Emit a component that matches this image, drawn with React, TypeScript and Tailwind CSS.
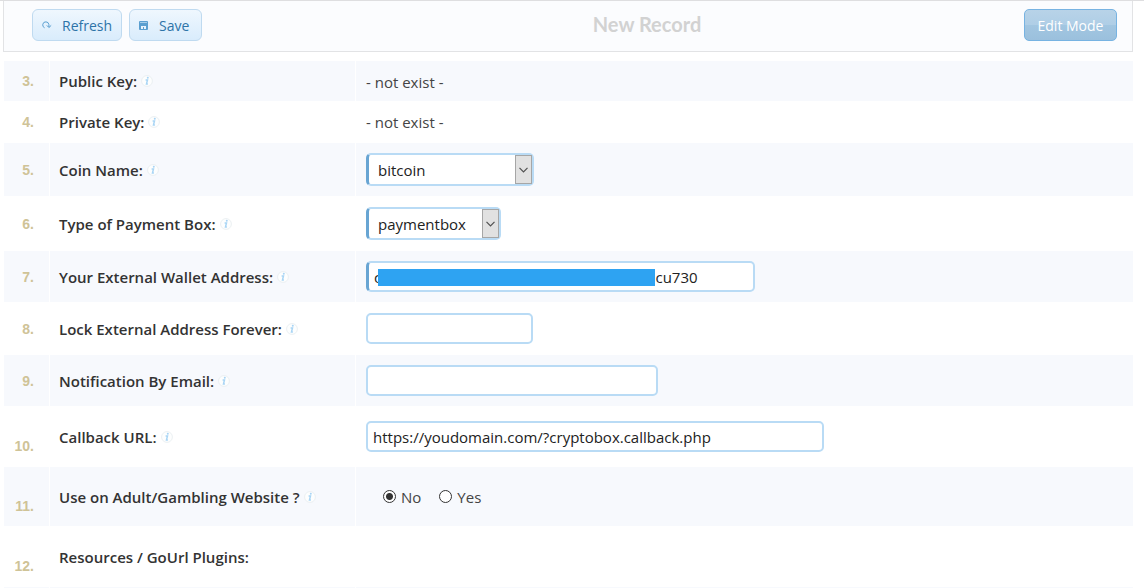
import React, { useState } from "react";

const fieldBase =
  "block rounded-[5px] border-2 border-[#b9dbf5] bg-white text-[15px] text-[#222] outline-none focus:border-[#8cc3ee]";

const toolButton =
  "flex h-8 items-center gap-2.5 rounded-md border border-[#bfdaf0] bg-linear-to-b from-[#eff7fe] to-[#d9ecfc] pt-0.5 pl-[9px] text-[14px] text-[#2e74a8]";

function InfoIcon() {
  return (
    <svg className="ml-1 inline-block shrink-0" width="12" height="12" viewBox="0 0 12 12" aria-hidden="true">
      <circle cx="6" cy="6" r="5.4" fill="#fdfefe" stroke="#e9eef0" strokeWidth="0.9" />
      <circle cx="6.8" cy="2.8" r="1" fill="#a9d5f5" />
      <path d="M4.6 4.9H6.5L5.5 8.9H6.9" fill="none" stroke="#a9d5f5" strokeWidth="1.5" />
    </svg>
  );
}

function RefreshIcon() {
  return (
    <svg width="10" height="10" viewBox="0 0 10 10" fill="none" stroke="#5b9fd0" aria-hidden="true">
      <path d="M2.6 6.8A3.1 3.1 0 1 1 6.9 3.6V6.2" strokeWidth="1" />
      <path d="M4.8 4.4L6.9 6.5L9.2 4.4" strokeWidth="1" />
    </svg>
  );
}

function SaveIcon() {
  return (
    <svg width="10" height="10" viewBox="0 0 10 10" aria-hidden="true">
      <rect x="0" y="0" width="9" height="9" rx="1" fill="#5b9fd0" />
      <rect x="1" y="1" width="7" height="1" fill="#a5cdea" />
      <path d="M2 5h5v3H5V6H4v2H2z" fill="#e8f3fc" />
    </svg>
  );
}

function SelectField({ id, options, width }: { id: string; options: string[]; width: string }) {
  return (
    <div className={`relative ${width}`}>
      <select id={id} className={`${fieldBase} h-[33px] w-full appearance-none border-l-[3px] border-l-[#68a5d3] pl-[9px]`}>
        {options.map((option) => (
          <option key={option}>{option}</option>
        ))}
      </select>
      <span className="pointer-events-none absolute inset-y-[2px] right-[2px] flex w-[17px] items-center justify-center border border-[#a6a6a6] bg-[#e1e1e1]">
        <svg width="9" height="6" viewBox="0 0 9 6" fill="none" stroke="#505050" strokeWidth="1.2" aria-hidden="true">
          <path d="M0.5 0.8L4.5 4.8L8.5 0.8" />
        </svg>
      </span>
    </div>
  );
}

type RowProps = {
  number: number;
  label: string;
  htmlFor?: string;
  height: string;
  shaded?: boolean;
  lowNumber?: boolean;
  info?: boolean;
  children?: React.ReactNode;
};

function Row({ number, label, htmlFor, height, shaded, lowNumber, info = true, children }: RowProps) {
  return (
    <tr className={`${height} ${shaded ? "bg-[#f7f9fd]" : "bg-white"}`}>
      <td
        className={`border-r border-white pr-[15px] text-right align-middle font-['Liberation_Sans',sans-serif] text-[14px] leading-4 font-bold text-[#cfc397] ${lowNumber ? "pt-[18px]" : ""}`}
      >
        {number}.
      </td>
      <th
        scope="row"
        className="border-r border-white pl-[9px] text-left align-middle text-[15px] font-semibold text-[#333]"
      >
        <span className="flex items-center">
          {htmlFor ? <label htmlFor={htmlFor}>{label}</label> : label}
          {info && <InfoIcon />}
        </span>
      </th>
      <td className="pl-[10px] align-middle">{children}</td>
    </tr>
  );
}

export default function App() {
  const [wallet, setWallet] = useState("c" + "\u00a0".repeat(70) + "\u200acu730");
  const [adult, setAdult] = useState("No");

  return (
    <main className="border-t border-[#dedee0] bg-white pr-[11px] pl-[3px] font-['Open_Sans','Noto_Sans',sans-serif] text-[15px] leading-5 text-[#444]">
      <header className="grid h-[51px] grid-cols-[auto_1fr_auto] items-start border border-t-0 border-[#e2e3e5] bg-[#fbfcfe] pt-2 pr-[15px] pl-7">
        <div className="flex gap-[7px]">
          <button type="button" className={`${toolButton} w-[90px]`}>
            <RefreshIcon />
            Refresh
          </button>
          <button type="button" className={`${toolButton} w-[73px]`}>
            <SaveIcon />
            Save
          </button>
        </div>
        <h1 className="pt-[3px] pl-17 text-center font-['Lato',sans-serif] text-[20px] leading-6 font-bold text-[#d2d2d2]">
          New Record
        </h1>
        <button
          type="button"
          className="h-8 w-[93px] rounded-[5px] border border-[#77b3e2] bg-[linear-gradient(#b8d3e8,#afcee6_50%,#a2c6e1_50%,#9bc0dd)] pt-0.5 text-[14px] text-white"
        >
          Edit Mode
        </button>
      </header>

      <form className="pt-[9px] pl-px" onSubmit={(e) => e.preventDefault()}>
        <table className="w-full table-fixed border-separate border-spacing-0">
          <colgroup>
            <col className="w-[46px]" />
            <col className="w-[306px]" />
            <col />
          </colgroup>
          <tbody>
            <Row number={3} label="Public Key:" height="h-10" shaded>
              <p className="pt-0.5">- not exist -</p>
            </Row>
            <Row number={4} label="Private Key:" height="h-[42px]">
              <p>- not exist -</p>
            </Row>
            <Row number={5} label="Coin Name:" htmlFor="coin" height="h-[53px]" shaded>
              <SelectField id="coin" options={["bitcoin"]} width="w-[168px]" />
            </Row>
            <Row number={6} label="Type of Payment Box:" htmlFor="boxtype" height="h-[55px]">
              <SelectField id="boxtype" options={["paymentbox"]} width="w-[135px]" />
            </Row>
            <Row number={7} label="Your External Wallet Address:" htmlFor="wallet" height="h-[51px]" shaded>
              <div className="relative w-[389px]">
                <input
                  id="wallet"
                  type="text"
                  value={wallet}
                  onChange={(e) => setWallet(e.target.value)}
                  className={`${fieldBase} h-[31px] w-full border-l-[3px] border-l-[#68a5d3] px-[5px]`}
                />
                <span className="pointer-events-none absolute top-2 left-3 h-[17px] w-[277px] bg-[#2ea3f2]" />
              </div>
            </Row>
            <Row number={8} label="Lock External Address Forever:" htmlFor="lock" height="h-[53px]">
              <input id="lock" type="text" className={`${fieldBase} h-[31px] w-[167px] px-[5px]`} />
            </Row>
            <Row number={9} label="Notification By Email:" htmlFor="email" height="h-[51px]" shaded>
              <input id="email" type="text" className={`${fieldBase} h-[31px] w-[292px] px-[5px]`} />
            </Row>
            <Row number={10} label="Callback URL:" htmlFor="callback" height="h-[61px]" lowNumber>
              <input
                id="callback"
                type="text"
                defaultValue="https://youdomain.com/?cryptobox.callback.php"
                className={`${fieldBase} h-[31px] w-[458px] px-[5px]`}
              />
            </Row>
            <Row number={11} label="Use on Adult/Gambling Website ?" height="h-[59px]" shaded lowNumber>
              <div className="flex gap-[18px] pl-[17px]" role="radiogroup" aria-label="Use on Adult/Gambling Website ?">
                {["No", "Yes"].map((option) => (
                  <label key={option} className="flex items-center gap-[5px]">
                    <input
                      type="radio"
                      name="adult"
                      checked={adult === option}
                      onChange={() => setAdult(option)}
                      className="size-[13px] appearance-none rounded-full border border-[#333] bg-white checked:bg-[radial-gradient(circle,#333_3px,#fff_4px)]"
                    />
                    {option}
                  </label>
                ))}
              </div>
            </Row>
            <Row number={12} label="Resources / GoUrl Plugins:" height="h-[61px]" lowNumber info={false} />
            <tr className="h-px bg-[#f7f9fd]">
              <td className="border-r border-white" />
              <td className="border-r border-white" />
              <td />
            </tr>
          </tbody>
        </table>
      </form>
    </main>
  );
}
